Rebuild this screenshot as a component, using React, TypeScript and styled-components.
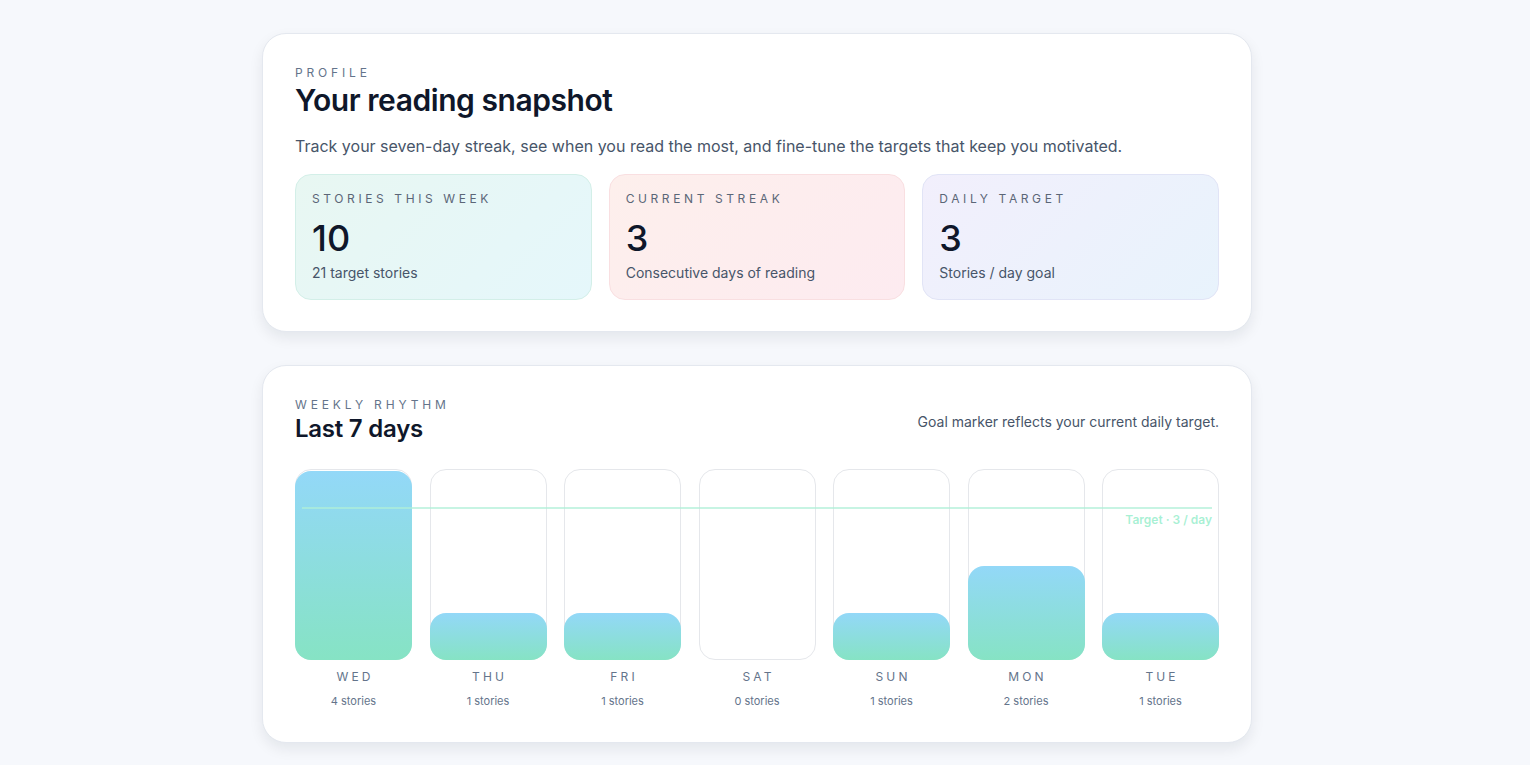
import React from "react";
import styled, { createGlobalStyle } from "styled-components";

const GlobalStyle = createGlobalStyle`
  * {
    box-sizing: border-box;
  }
  body {
    margin: 0;
    background: #f6f8fc;
    font-family: Inter, "Noto Sans", "Liberation Sans", sans-serif;
    color: #0f172a;
  }
`;

type Tone = "mint" | "rose" | "lilac";

const stats: { label: string; value: string; note: string; tone: Tone }[] = [
  { label: "Stories this week", value: "10", note: "21 target stories", tone: "mint" },
  { label: "Current streak", value: "3", note: "Consecutive days of reading", tone: "rose" },
  { label: "Daily target", value: "3", note: "Stories / day goal", tone: "lilac" },
];

const week = [
  { day: "Wed", count: 4 },
  { day: "Thu", count: 1 },
  { day: "Fri", count: 1 },
  { day: "Sat", count: 0 },
  { day: "Sun", count: 1 },
  { day: "Mon", count: 2 },
  { day: "Tue", count: 1 },
];

const DAILY_TARGET = 3;
const TRACK_HEIGHT = 191;

const tones: Record<Tone, { bg: string; border: string }> = {
  mint: {
    bg: "linear-gradient(135deg, #e8f7f2 0%, #e5f7fb 100%)",
    border: "#d3efe8",
  },
  rose: {
    bg: "linear-gradient(135deg, #fdefec 0%, #fdebf0 100%)",
    border: "#f9dfe1",
  },
  lilac: {
    bg: "linear-gradient(135deg, #f2effc 0%, #e8f3fc 100%)",
    border: "#e1e4f6",
  },
};

const Page = styled.main`
  padding: 33px 16px 32px 0;
`;

const Column = styled.div`
  width: 990px;
  margin: 0 auto;
  display: flex;
  flex-direction: column;
  gap: 33px;
`;

const Card = styled.section<{ $tall?: boolean }>`
  background: #ffffff;
  border: 1px solid #e4e8ef;
  border-radius: 24px;
  padding: 32px 32px ${(p) => (p.$tall ? 34 : 31)}px;
  box-shadow: 0 6px 14px rgba(15, 23, 42, 0.08);
`;

const Eyebrow = styled.div`
  font-size: 12px;
  line-height: 14px;
  letter-spacing: 0.32em;
  text-transform: uppercase;
  color: #64748b;
`;

const Title = styled.h1`
  margin: 1px 0 0;
  font-size: 30px;
  line-height: 38px;
  font-weight: 600;
  letter-spacing: -0.015em;
  color: #0f172a;
`;

const SubTitle = styled.h2`
  margin: 2px 0 0;
  font-size: 24px;
  line-height: 30px;
  font-weight: 600;
  letter-spacing: -0.01em;
  color: #0f172a;
`;

const Lead = styled.p`
  margin: 16px 0 0;
  font-size: 16px;
  line-height: 22px;
  color: #475569;
`;

const StatGrid = styled.div`
  margin-top: 17px;
  display: grid;
  grid-template-columns: repeat(3, 1fr);
  gap: 17px;
`;

const StatCard = styled.div<{ $tone: Tone }>`
  height: 126px;
  padding: 17px 16px;
  border-radius: 16px;
  background: ${(p) => tones[p.$tone].bg};
  border: 1px solid ${(p) => tones[p.$tone].border};
`;

const StatLabel = styled.div`
  font-size: 12px;
  line-height: 14px;
  letter-spacing: 0.3em;
  text-transform: uppercase;
  color: #5b6677;
`;

const StatValue = styled.div`
  margin-top: 12px;
  font-size: 36px;
  line-height: 40px;
  font-weight: 500;
  color: #0f172a;
`;

const StatNote = styled.div`
  margin-top: 5px;
  font-size: 14px;
  line-height: 20px;
  color: #475569;
`;

const HeaderRow = styled.div`
  display: flex;
  justify-content: space-between;
  align-items: flex-end;
`;

const Hint = styled.p`
  margin: 0 0 12px;
  font-size: 14px;
  line-height: 20px;
  color: #475569;
`;

const Chart = styled.div`
  position: relative;
  margin-top: 25px;
  display: grid;
  grid-template-columns: repeat(7, 1fr);
  gap: 17.5px;
`;

const DayColumn = styled.div`
  display: flex;
  flex-direction: column;
  align-items: center;
`;

const Track = styled.div`
  width: 100%;
  height: ${TRACK_HEIGHT}px;
  display: flex;
  align-items: flex-end;
  border: 1px solid #e5e7eb;
  border-radius: 16px;
  background: #ffffff;
`;

const Fill = styled.div`
  width: calc(100% + 2px);
  margin: 0 -1px -1px;
  border-radius: 16px;
  background: linear-gradient(180deg, #93d8f8 0%, #86e3c4 100%);
`;

const DayName = styled.div`
  margin-top: 10px;
  font-size: 12px;
  line-height: 14px;
  letter-spacing: 0.26em;
  padding-left: 0.26em;
  text-transform: uppercase;
  color: #64748b;
`;

const DayCount = styled.div`
  margin-top: 10px;
  font-size: 11px;
  line-height: 14px;
  color: #64748b;
`;

const GoalLine = styled.div`
  position: absolute;
  z-index: 1;
  left: 7px;
  right: 7px;
  height: 2px;
  background: rgba(175, 240, 215, 0.7);
  pointer-events: none;
`;

const GoalTag = styled.span`
  position: absolute;
  right: 0;
  top: 6px;
  font-size: 12px;
  line-height: 14px;
  font-weight: 600;
  color: rgba(110, 231, 183, 0.6);
  white-space: nowrap;
`;

const maxCount = Math.max(...week.map((d) => d.count), DAILY_TARGET);

export default function App() {
  const goalTop = TRACK_HEIGHT * 0.2;

  return (
    <Page>
      <GlobalStyle />
      <Column>
        <Card>
          <Eyebrow>Profile</Eyebrow>
          <Title>Your reading snapshot</Title>
          <Lead>
            Track your seven-day streak, see when you read the most, and
            fine-tune the targets that keep you motivated.
          </Lead>
          <StatGrid>
            {stats.map((s) => (
              <StatCard key={s.label} $tone={s.tone}>
                <StatLabel>{s.label}</StatLabel>
                <StatValue>{s.value}</StatValue>
                <StatNote>{s.note}</StatNote>
              </StatCard>
            ))}
          </StatGrid>
        </Card>

        <Card $tall>
          <HeaderRow>
            <div>
              <Eyebrow>Weekly rhythm</Eyebrow>
              <SubTitle>Last 7 days</SubTitle>
            </div>
            <Hint>Goal marker reflects your current daily target.</Hint>
          </HeaderRow>
          <Chart>
            {week.map((d) => (
              <DayColumn key={d.day}>
                <Track>
                  {d.count > 0 && (
                    <Fill style={{ height: `${(d.count / maxCount) * 100}%` }} />
                  )}
                </Track>
                <DayName>{d.day}</DayName>
                <DayCount>{d.count} stories</DayCount>
              </DayColumn>
            ))}
            <GoalLine style={{ top: goalTop }}>
              <GoalTag>Target · {DAILY_TARGET} / day</GoalTag>
            </GoalLine>
          </Chart>
        </Card>
      </Column>
    </Page>
  );
}
